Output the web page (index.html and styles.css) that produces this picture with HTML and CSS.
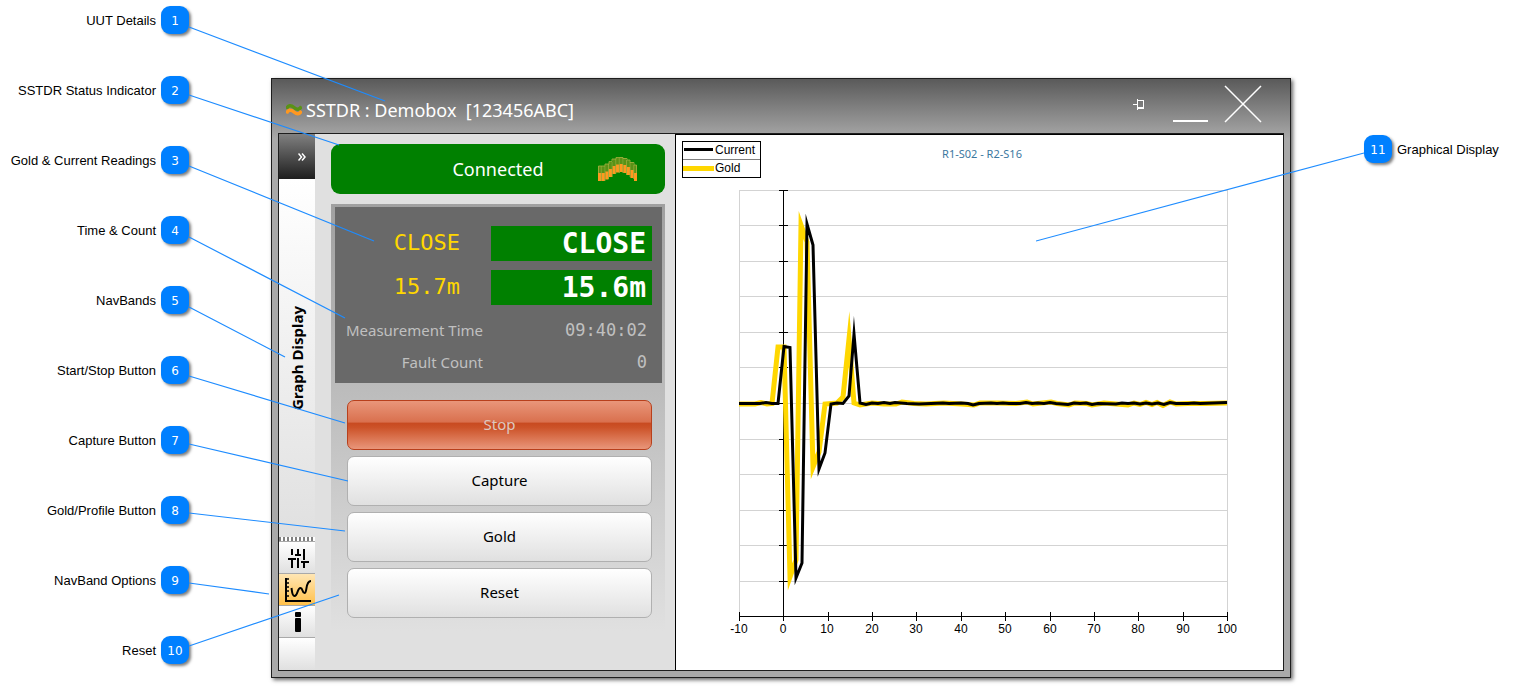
FILE: index.html
```html
<!DOCTYPE html>
<html lang="en">
<head>
    <meta charset="UTF-8">
    <meta name="viewport" content="width=device-width, initial-scale=1.0">
    <title>SSTDR Graph Display</title>
    <link rel="stylesheet" href="styles.css">
</head>
<body>
<div class="page">

    <!-- Callouts, left side -->
    <ol class="callouts">
        <li>UUT Details <span class="badge">1</span></li>
        <li>SSTDR Status Indicator <span class="badge">2</span></li>
        <li>Gold &amp; Current Readings <span class="badge">3</span></li>
        <li>Time &amp; Count <span class="badge">4</span></li>
        <li>NavBands <span class="badge">5</span></li>
        <li>Start/Stop Button <span class="badge">6</span></li>
        <li>Capture Button <span class="badge">7</span></li>
        <li>Gold/Profile Button <span class="badge">8</span></li>
        <li>NavBand Options <span class="badge">9</span></li>
        <li>Reset <span class="badge">10</span></li>
    </ol>

    <!-- Application window -->
    <main class="window">
        <header class="titlebar">
            <h1>
                <svg width="16" height="12" viewBox="0 0 16 12" fill="none">
                    <path stroke="#5a9216" stroke-width="3.500" d="M0.500 5C2 1 5 1 8 3.500S13 6 15.500 2.500"/>
                    <path stroke="#ff981f" stroke-width="3.500" d="M0.500 9.500C2 5.500 5 5.500 8 8S13 10.500 15.500 7"/>
                </svg>
                <span>SSTDR : Demobox&nbsp; [123456ABC]</span>
            </h1>
            <button type="button" class="pin" aria-label="Pin">
                <svg width="12" height="50" viewBox="0 0 12 50" fill="none" stroke="#fff" shape-rendering="crispEdges">
                    <path d="M0 25.500H4M4.500 20V31M4 21.500H10.500V29.500H4M4 28.500H10"/>
                </svg>
            </button>
            <button type="button" class="minimize" aria-label="Minimize">
                <svg width="35" height="50" viewBox="0 0 35 50"><path fill="#fff" d="M0 41h35v2H0z"/></svg>
            </button>
            <button type="button" class="close" aria-label="Close">
                <svg width="38" height="50" viewBox="0 0 38 50" stroke="#fff" stroke-width="1.500"><path d="M1 7L37 43M37 7L1 43"/></svg>
            </button>
        </header>

        <div class="workspace">
            <nav class="navband">
                <button type="button" class="expand" aria-label="Expand">
                    <svg width="8" height="8" viewBox="0 0 8 8" fill="none" stroke="#fff" stroke-width="1.500"><path d="M0.500 0.500L3.500 4L0.500 7.500M4 0.500L7 4L4 7.500"/></svg>
                </button>
                <div class="band-title"><span>Graph Display</span></div>
                <div class="splitter"></div>
                <button type="button" class="band" aria-label="Settings">
                    <svg width="36" height="31" viewBox="0 0 36 31" fill="none" stroke="#000" stroke-width="2">
                        <path d="M13 7V13M9 17H17M13 17V26M19 7V14M16 13H22M19 16V26M25 7V18M22 20H30M25 20V26"/>
                    </svg>
                </button>
                <button type="button" class="band active" aria-label="Graph">
                    <svg width="36" height="31" viewBox="0 0 36 31" fill="none" stroke="#000">
                        <path stroke-width="2" d="M7 4V27H32"/>
                        <path stroke-width="1.500" d="M7 5H10M7 9H10M7 13H10M7 17H10M7 22H10"/>
                        <path stroke-width="2" d="M12.500 14C13 17 13 22 15.500 22C19 22 18 14 21.500 14C24 14 23 19 25.500 19C28.500 19 26 7 32 7"/>
                    </svg>
                </button>
                <button type="button" class="band" aria-label="Information">
                    <svg width="36" height="31" viewBox="0 0 36 31"><rect x="16" y="6" width="6" height="5" rx="1"/><rect x="16" y="12" width="6" height="14" rx="1"/></svg>
                </button>
                <div class="band-rest"></div>
            </nav>

            <section class="controls">
                <div class="status" role="status">
                    <span class="status-text">Connected</span>
                    <svg width="40" height="24" viewBox="0 0 40 24">
                        <path fill="#5a9216" d="M0 9h3v7h-3zM3.600 9h3v7h-3zM7.200 7h3v8h-3zM10.800 5h3v7h-3zM14.400 2h3v7h-3zM18 1h3v7h-3zM21.600 0h3v7h-3zM25.200 1h3v7h-3zM28.800 3h3v7h-3zM32.400 5h3v8h-3zM36 8h3v8h-3z"/>
                        <path fill="#ff981f" d="M0 16h3.300v8h-3.300zM3.600 16h3.300v8h-3.300zM7.200 14.500h3.300v8h-3.300zM10.800 12h3.300v8h-3.300zM14.400 9h3.300v8h-3.300zM18 7.500h3.300v8h-3.300zM21.600 7h3.300v8h-3.300zM25.200 8h3.300v8h-3.300zM28.800 10h3.300v8h-3.300zM32.400 13h3.300v8h-3.300zM36 16h3v8h-3z"/>
                        <path fill="none" stroke="#a8b040" stroke-width="0.800" d="M0.500 16V9H7V7H11V4.500H14V2H18V0.500H25V1.500H29V3H32V5.500H36V8H38.500V16M3.300 9V24M6.900 9V24M10.500 7V22M14.100 5V20M17.700 2V17M21.300 1V16M24.900 1V16M28.500 3V18M32.100 5V20M35.700 8V22"/>
                    </svg>
                </div>

                <div class="panel">
                    <div class="readings">
                        <span class="gold">CLOSE</span>
                        <strong class="current">CLOSE</strong>
                        <span class="gold">15.7m</span>
                        <strong class="current">15.6m</strong>
                        <dl class="counts">
                            <dt>Measurement Time</dt>
                            <dd>09:40:02</dd>
                            <dt>Fault Count</dt>
                            <dd>0</dd>
                        </dl>
                    </div>
                    <div class="actions">
                        <button type="button" class="stop">Stop</button>
                        <button type="button">Capture</button>
                        <button type="button">Gold</button>
                        <button type="button">Reset</button>
                    </div>
                </div>
            </section>

            <section class="graph">
                <svg class="chart" viewBox="0 0 607 535">
                    <!-- Legend -->
                    <g transform="translate(6 6)">
                        <rect x="0.500" y="0.500" width="78" height="36" fill="#fff" stroke="#000"/>
                        <path d="M1 18.500H78" stroke="#808080"/>
                        <path class="current-line" d="M2 8.500H31"/>
                        <path class="gold-line" d="M1 27.500H32"/>
                        <text x="33" y="13">Current</text>
                        <text x="33" y="31">Gold</text>
                    </g>

                    <text class="chart-title" x="306" y="23">R1-S02 - R2-S16</text>

                    <g transform="translate(63 55)">
                        <path class="grid" d="M0.500 0V426M488.500 0V426M0 0.500H488M0 35.500H488M0 71.500H488M0 106.500H488M0 142.500H488M0 177.500H488M0 213.500H488M0 249.500H488M0 284.500H488M0 320.500H488M0 355.500H488M0 391.500H488"/>
                        <path class="axis" d="M44.500 0V430M40 0.500H49M40 35.500H49M40 71.500H49M40 106.500H49M40 142.500H49M40 177.500H49M40 213.500H49M40 249.500H49M40 284.500H49M40 320.500H49M40 355.500H49M40 391.500H49"/>
                        <path class="axis" d="M0 426.500H489M0.500 422V431M44.500 422V431M89.500 422V431M133.500 422V431M177.500 422V431M222.500 422V431M266.500 422V431M311.500 422V431M355.500 422V431M399.500 422V431M444.500 422V431M488.500 422V431"/>

                        <polyline class="gold-line" points="0,214 16,214 22,212.500 28,214 33,213.500 39,157 45,157 51,387 57,370 62,35 68,52 74,277 80,262 86,214 98,213 104,207 110,149 115,213 121,215 133,213 145,214 157,214 163,212 175,213.500 187,214 205,213 223,214 235,215 241,213 259,213 277,213.500 288,212 294,214 312,212 318,213.500 330,215 336,213 348,213.500 353,215 365,213 377,214 389,215 395,213 401,214.500 407,212.500 413,214.500 418,212.500 424,215.500 431,212 437,214 449,213.500 466,213.500 488,213"/>
                        <polyline class="current-line" points="0,213.500 21,213.500 27,212.500 33,213.500 39,213.500 45,156.500 51,157.500 57,388 63,373 68,34 74,55 80,279 86,263 92,214 98,213 104,213.500 110,206 115,144 121,213 127,214.500 133,213 139,213.500 145,212.500 151,213.500 156,212.500 168,213.500 180,214 192,213.500 204,213 210,213.500 222,213 229,213.500 234,215 240,213.500 252,213 258,213.500 264,213 270,213.500 281,213.500 287,212.500 293,213.500 299,213 305,213.500 311,212.500 317,213.500 329,214.500 335,213 341,213.500 347,213 353,214.500 359,213.500 377,214 383,213 389,213.500 395,213 401,214 407,213 413,214 419,213 425,214.500 431,212.500 437,213.500 449,213.500 455,213 461,213.500 488,212.500"/>

                        <g class="axis-labels">
                            <text x="0" y="443">-10</text>
                            <text x="44" y="443">0</text>
                            <text x="88" y="443">10</text>
                            <text x="133" y="443">20</text>
                            <text x="177" y="443">30</text>
                            <text x="222" y="443">40</text>
                            <text x="266" y="443">50</text>
                            <text x="311" y="443">60</text>
                            <text x="355" y="443">70</text>
                            <text x="399" y="443">80</text>
                            <text x="444" y="443">90</text>
                            <text x="488" y="443">100</text>
                        </g>
                    </g>
                </svg>
            </section>
        </div>
    </main>

    <!-- Callout, right side -->
    <ol class="callouts right" start="11">
        <li><span class="badge">11</span> Graphical Display</li>
    </ol>

    <!-- Leader lines over the window -->
    <svg class="leaders leaders-left" width="400" height="687">
        <path d="M189 27L385 101M189 95L339 145M189 166L374 241M189 237L345 318M189 307L285 357M189 376L345 423M189 444L348 481M189 513L345 531M189 583L269 594M189 646L339 595"/>
    </svg>
    <svg class="leaders leaders-right" width="479" height="300">
        <path d="M328 153L0 241"/>
    </svg>
</div>
</body>
</html>
```
FILE: styles.css
```css
body {
    margin: 0;
    background: #fff;
    font-family: "Liberation Sans", Arial, sans-serif;
    font-size: 13px;
    color: #000;
}

button {
    margin: 0;
    padding: 0;
    border: 0;
    background: none;
    font: inherit;
    cursor: pointer;
}

svg {
    display: block;
}

.page {
    position: relative;
    display: flex;
    align-items: flex-start;
}

/* Callouts */
.callouts {
    flex: none;
    width: 189px;
    margin: 0;
    padding: 6px 0 0;
    list-style: none;
    display: flex;
    flex-direction: column;
    gap: 42px;
}

.callouts li {
    display: flex;
    align-items: center;
    justify-content: flex-end;
    gap: 5px;
    white-space: nowrap;
}

.callouts.right {
    width: 151px;
    padding-top: 135px;
}

.callouts.right li {
    justify-content: flex-start;
}

.badge {
    width: 28px;
    height: 28px;
    border-radius: 9px;
    background: #0080ff;
    box-shadow: 2px 2px 3px rgba(0, 0, 0, 0.5);
    color: #fff;
    font-family: "DejaVu Sans", Verdana, sans-serif;
    font-size: 12px;
    line-height: 30px;
    text-align: center;
}

.leaders {
    position: absolute;
    top: 0;
    fill: none;
    stroke: #1e8cff;
    stroke-width: 1.2;
    pointer-events: none;
}

.leaders-left {
    left: 0;
}

.leaders-right {
    right: 0;
}

/* Window */
.window {
    flex: 1;
    min-width: 0;
    margin: 78px 73px 9px 82px;
    padding: 0 6px 6px;
    border: 1px solid #1e1e1e;
    background: linear-gradient(#5a5a5a, #a9a9a9 60px);
    box-shadow: 2px 2px 4px rgba(0, 0, 0, 0.6);
    font-family: "Noto Sans", Tahoma, sans-serif;
}

.titlebar {
    display: flex;
    align-items: flex-start;
    height: 54px;
    color: #fff;
}

.titlebar h1 {
    flex: 1;
    display: flex;
    align-items: center;
    gap: 4px;
    margin: 0;
    padding: 8px 0 0 8px;
    font-size: 18px;
    font-weight: 400;
    line-height: 46px;
}

.minimize {
    margin-left: 28px;
}

.close {
    margin: 0 22px 0 16px;
}

.workspace {
    display: flex;
    border: 1px solid #1e1e1e;
    background: #e0e0e0;
}

/* Nav band */
.navband {
    flex: none;
    width: 36px;
    display: flex;
    flex-direction: column;
}

.expand {
    display: flex;
    align-items: center;
    justify-content: flex-end;
    height: 45px;
    padding-right: 9px;
    background: linear-gradient(#808080, #1e1e1e);
}

.band-title {
    flex: 1;
    display: flex;
    align-items: center;
    justify-content: center;
    background: linear-gradient(#fff, #e0e0e0);
}

.band-title span {
    writing-mode: vertical-rl;
    transform: rotate(180deg);
    font-size: 15px;
    font-weight: 700;
}

.splitter {
    height: 4px;
    border-bottom: 1px solid #a9a9a9;
    background: repeating-linear-gradient(90deg, #808080 0 2px, #fff 2px 4px);
}

.band {
    height: 32px;
    border-bottom: 1px solid #a9a9a9;
    background: linear-gradient(#fff, #e0e0e0);
}

.band.active {
    background: linear-gradient(#ffe6b4, #ffc04a);
}

.band-rest {
    height: 32px;
    background: linear-gradient(#fff, #e0e0e0);
}

/* Controls */
.controls {
    flex: none;
    box-sizing: border-box;
    width: 360px;
    padding: 10px 10px 10px 16px;
}

.status {
    display: grid;
    grid-template-columns: 1fr auto 1fr;
    align-items: center;
    height: 50px;
    border-radius: 9px;
    background: #008000;
    color: #fff;
    font-size: 18px;
}

.status-text {
    grid-column: 2;
}

.status svg {
    justify-self: end;
    margin-right: 27px;
}

.panel {
    margin-top: 10px;
    padding: 3px 3px 13px 4px;
    background: linear-gradient(#a0a0a0, #e0e0e0);
}

.readings {
    display: grid;
    grid-template-columns: 148px 1fr;
    gap: 9px 8px;
    padding: 19px 10px 5px 0;
    background: #696969;
    font-family: "DejaVu Sans Mono", "Lucida Console", monospace;
    text-align: right;
}

.gold {
    padding-right: 23px;
    color: #ffd700;
    font-size: 22px;
    line-height: 34px;
}

.current {
    padding-right: 6px;
    background: #008000;
    color: #fff;
    font-size: 28px;
    line-height: 35px;
}

.counts {
    grid-column: 1 / 3;
    display: grid;
    grid-template-columns: 148px 1fr;
    margin: 0;
    color: #c0c0c0;
    line-height: 32px;
}

.counts dt {
    font-family: "Noto Sans", Tahoma, sans-serif;
    font-size: 15px;
}

.counts dd {
    margin: 0;
    padding-right: 5px;
    font-size: 17px;
}

.actions {
    display: flex;
    flex-direction: column;
    gap: 6px;
    padding: 17px 10px 0 12px;
}

.actions button {
    height: 50px;
    padding-bottom: 2px;
    border: 1px solid #b0b0b0;
    border-radius: 7px;
    background: linear-gradient(#fff, #e0e0e0);
    font-size: 15px;
    color: #000;
}

.actions .stop {
    border-color: #b8401c;
    background: linear-gradient(#e9967a, #d9704e 44%, #c84a20 46%, #cc5228 55%, #e9967a);
    color: #dcc8c0;
}

/* Graph */
.graph {
    flex: 1;
    min-width: 0;
    border-top: 1px solid #000;
    border-left: 1px solid #000;
    background: #fff;
}

.chart {
    width: 100%;
    font-family: "Liberation Sans", Arial, sans-serif;
    font-size: 12px;
}

.chart-title {
    fill: #3c78a0;
    font-family: "Noto Sans", Tahoma, sans-serif;
    font-size: 11px;
    text-anchor: middle;
}

.grid {
    stroke: #d3d3d3;
}

.axis {
    stroke: #000;
}

.axis-labels {
    text-anchor: middle;
}

.current-line,
.gold-line {
    fill: none;
    stroke: #000;
    stroke-width: 3;
    stroke-miterlimit: 30;
}

.gold-line {
    stroke: #ffd700;
    stroke-width: 5;
}
```
